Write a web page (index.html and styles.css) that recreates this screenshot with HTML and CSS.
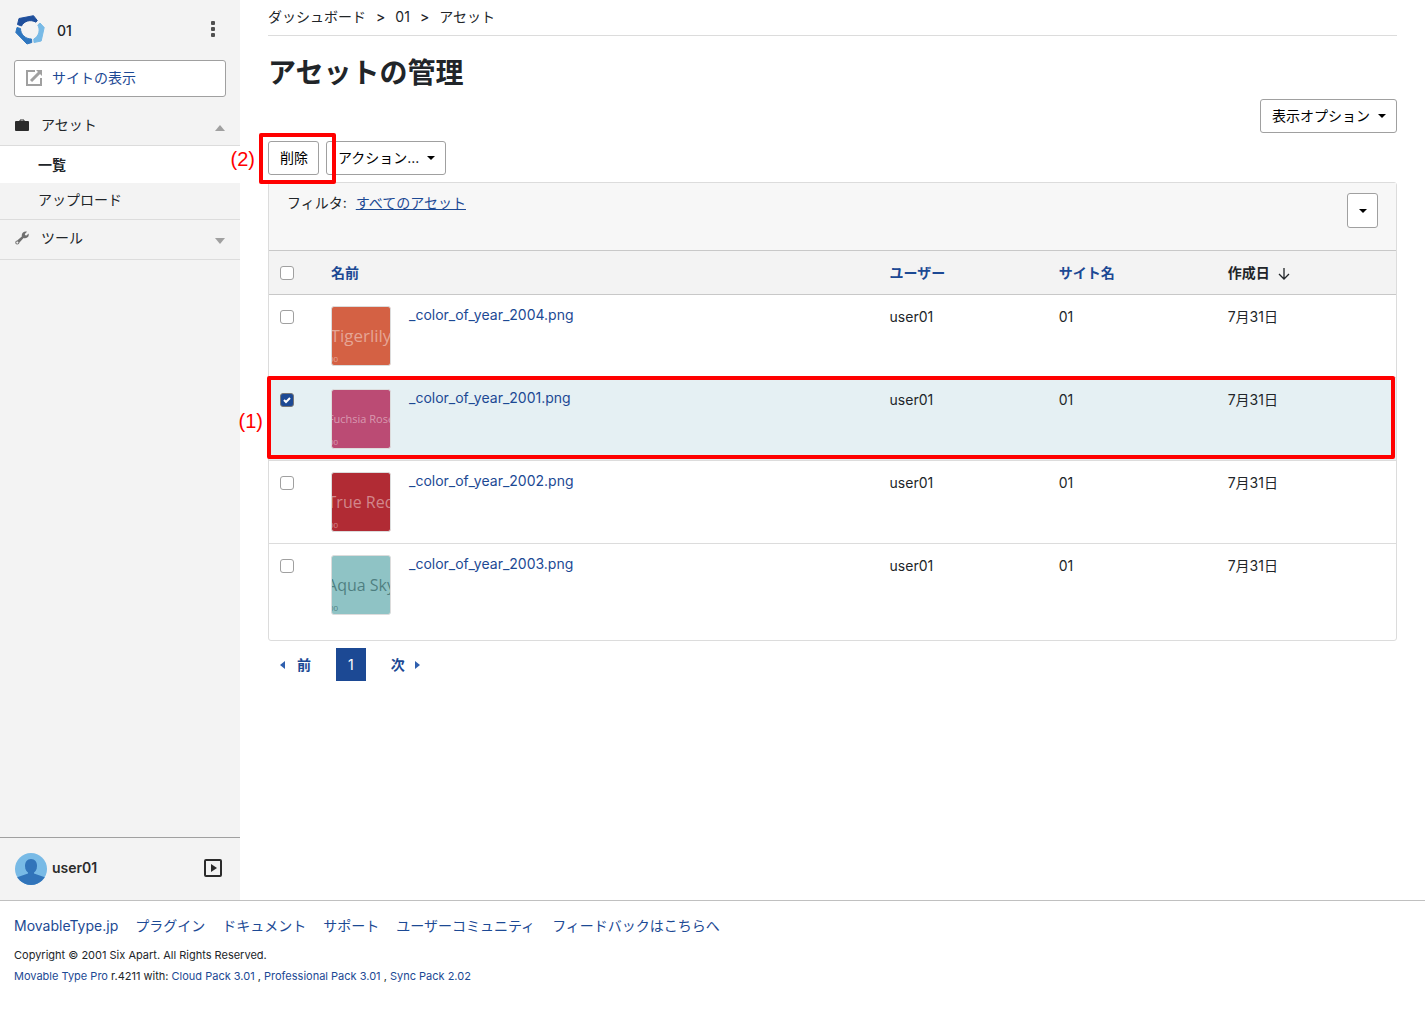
FILE: index.html
```html
<!DOCTYPE html>
<html lang="ja">
<head>
<meta charset="utf-8">
<title>アセットの管理</title>
<link rel="stylesheet" href="styles.css">
</head>
<body>
<div class="layout">
  <aside class="sidebar">
    <div class="site-head">
      <svg class="logo" width="30" height="30" viewBox="0 0 30 30" aria-hidden="true">
        <g stroke-width="1" stroke-linejoin="round">
        <path fill="#1f4f9c" stroke="#1f4f9c" d="M4 3.500L18.500 .7L22.300 5.500L21 7.200C15.500 4 9 6 6.500 11L2.500 9.500Z"/>
        <path fill="#2e76bf" stroke="#2e76bf" d="M2 12.500L5.500 13.500C5.500 19 10 24 16.500 24L16.800 27.500L12 29L.8 17.500Z"/>
        <path fill="#78bae6" stroke="#78bae6" d="M25 8L29.200 12.500L26.200 26L19 27.500L18.800 24C24 21 25.500 15 22.800 10Z"/>
        </g>
      </svg>
      <span class="site-name">01</span>
      <button class="icon-button" type="button" aria-label="メニュー">
        <svg width="4" height="16" viewBox="0 0 4 16"><g fill="#505050"><rect width="4" height="4" rx="1"/><rect y="6" width="4" height="4" rx="1"/><rect y="12" width="4" height="4" rx="1"/></g></svg>
      </button>
    </div>
    <a class="site-view" href="#">
      <svg width="16" height="16" viewBox="0 0 16 16" aria-hidden="true"><path d="M9 1H1V15H15V8" fill="none" stroke="#a0a0a0" stroke-width="2"/><path d="M5 11L14 2" stroke="#a0a0a0" stroke-width="3"/><path d="M10 0H16V6Z" fill="#a0a0a0"/></svg>
      サイトの表示
    </a>
    <nav>
      <a class="menu" href="#">
        <svg width="14" height="14" viewBox="0 0 14 14" aria-hidden="true"><path d="M5 4V2H9V4" fill="none" stroke="#2b2b2b"/><rect y="3" width="14" height="10" rx="1" fill="#2b2b2b"/></svg>
        アセット
        <svg class="menu-arrow" width="10" height="6" viewBox="0 0 10 6" aria-hidden="true"><path d="M0 6L5 0L10 6Z" fill="#a0a0a0"/></svg>
      </a>
      <ul class="submenu">
        <li><a class="current" href="#">一覧</a></li>
        <li><a href="#">アップロード</a></li>
      </ul>
      <a class="menu closed" href="#">
        <svg width="14" height="14" viewBox="0 0 14 14" aria-hidden="true"><path fill="#707070" fill-rule="evenodd" d="M8 1.500C9.200 .4 10.600 .2 12 .7L9.800 2.900L10.200 4.200L11.500 4.500L13.600 2.400C14 4 13.600 5.400 12.500 6.300C11.400 7.200 10 7.500 8.600 7.100L4.500 11.500C4.300 12.700 3.400 13.500 2.200 13.500C1 13.500 .3 12.500 .3 11.500C.3 10.400 1.200 9.500 2.200 9.500L6.800 5.400C6.600 4 7 2.500 8 1.500ZM2.300 10.500A1.100 1.100 0 1 0 2.300 12.700A1.100 1.100 0 1 0 2.300 10.500Z"/></svg>
        ツール
        <svg class="menu-arrow" width="10" height="6" viewBox="0 0 10 6" aria-hidden="true"><path d="M0 0L5 6L10 0Z" fill="#a0a0a0"/></svg>
      </a>
    </nav>
    <div class="user">
      <svg width="32" height="32" viewBox="0 0 32 32" aria-hidden="true"><clipPath id="avatar"><circle cx="16" cy="16" r="16"/></clipPath><g clip-path="url(#avatar)"><rect width="32" height="32" fill="#78bae6"/><path fill="#3174ba" d="M16 6C20 6 22 9 22 13C22 17 20 19 19 19.500V20.500L32 25V32H0V25L13 20.500V19.500C12 19 10 17 10 13C10 9 12 6 16 6Z"/></g></svg>
      <span>user01</span>
      <button class="icon-button" type="button" aria-label="開く">
        <svg width="18" height="18" viewBox="0 0 18 18"><rect x="1" y="1" width="16" height="16" rx="1" fill="none" stroke="#2b2b2b" stroke-width="2"/><path d="M7 5V13L13 9Z" fill="#2b2b2b"/></svg>
      </button>
    </div>
  </aside>

  <main>
    <nav class="breadcrumb"><a href="#">ダッシュボード</a><b>&gt;</b><a href="#">01</a><b>&gt;</b><a href="#">アセット</a></nav>
    <h1>アセットの管理</h1>
    <div class="options"><button class="btn" type="button">表示オプション<i class="caret"></i></button></div>
    <div class="actions">
      <button class="btn" type="button">削除</button>
      <button class="btn" type="button">アクション...<i class="caret"></i></button>
      <div class="mark mark-delete"><span>(2)</span></div>
    </div>
    <div class="panel">
      <div class="filter">
        <p>フィルタ:<a href="#">すべてのアセット</a></p>
        <button class="btn btn-caret" type="button" aria-label="フィルタを選択"><i class="caret"></i></button>
      </div>
      <table>
        <colgroup><col class="col-check"><col><col class="col-user"><col class="col-site"><col class="col-date"></colgroup>
        <thead>
          <tr><th><input type="checkbox" aria-label="すべて選択"></th><th><a href="#">名前</a></th><th><a href="#">ユーザー</a></th><th><a href="#">サイト名</a></th><th>作成日<svg class="sort" width="12" height="12" viewBox="0 0 12 12" aria-hidden="true"><path d="M6 0V11M1 6L6 11L11 6" fill="none" stroke="#212529" stroke-width="1.300"/></svg></th></tr>
        </thead>
        <tbody>
          <tr><td><input type="checkbox" aria-label="_color_of_year_2004.png"></td><td><div class="asset"><div class="thumb tiger"><span>Tigerlily</span><small>00</small></div><a href="#">_color_of_year_2004.png</a></div></td><td>user01</td><td>01</td><td>7月31日</td></tr>
          <tr class="selected"><td><input type="checkbox" checked aria-label="_color_of_year_2001.png"><div class="mark mark-row"><span>(1)</span></div></td><td><div class="asset"><div class="thumb fuchsia"><span>Fuchsia Rose</span><small>00</small></div><a href="#">_color_of_year_2001.png</a></div></td><td>user01</td><td>01</td><td>7月31日</td></tr>
          <tr><td><input type="checkbox" aria-label="_color_of_year_2002.png"></td><td><div class="asset"><div class="thumb red"><span>True Red</span><small>00</small></div><a href="#">_color_of_year_2002.png</a></div></td><td>user01</td><td>01</td><td>7月31日</td></tr>
          <tr><td><input type="checkbox" aria-label="_color_of_year_2003.png"></td><td><div class="asset"><div class="thumb aqua"><span>Aqua Sky</span><small>00</small></div><a href="#">_color_of_year_2003.png</a></div></td><td>user01</td><td>01</td><td>7月31日</td></tr>
        </tbody>
      </table>
    </div>
    <nav class="pager">
      <a href="#"><svg width="5" height="8" viewBox="0 0 5 8" aria-hidden="true"><path d="M5 0V8L0 4Z" fill="#2f5fae"/></svg>前</a>
      <a class="page" href="#">1</a>
      <a href="#">次<svg width="5" height="8" viewBox="0 0 5 8" aria-hidden="true"><path d="M0 0V8L5 4Z" fill="#2f5fae"/></svg></a>
    </nav>
  </main>
</div>
<footer>
  <nav><a href="#">MovableType.jp</a><a href="#">プラグイン</a><a href="#">ドキュメント</a><a href="#">サポート</a><a href="#">ユーザーコミュニティ</a><a href="#">フィードバックはこちらへ</a></nav>
  <p>Copyright © 2001 Six Apart. All Rights Reserved.</p>
  <p><a href="#">Movable Type Pro</a> r.4211 with: <a href="#">Cloud Pack 3.01</a> , <a href="#">Professional Pack 3.01</a> , <a href="#">Sync Pack 2.02</a></p>
</footer>
</body>
</html>
```
FILE: styles.css
```css
* { box-sizing: border-box; }
body {
  margin: 0;
  min-height: 100vh;
  display: flex;
  flex-direction: column;
  background: #fff;
  color: #212529;
  font: 14px/20px Inter, "Noto Sans CJK JP", sans-serif;
}
a { color: #1c4994; text-decoration: none; }
button { font: inherit; cursor: pointer; }
p, ul, h1 { margin: 0; padding: 0; }
.layout { flex: 1; display: flex; }

.sidebar {
  flex: none;
  width: 240px;
  display: flex;
  flex-direction: column;
  background: #f3f3f3;
}
.site-head { display: flex; align-items: center; height: 60px; padding: 0 15px; }
.site-name { margin-left: 12px; padding-top: 2px; font-weight: 500; }
.icon-button { display: flex; margin-left: auto; padding: 0; border: 0; background: none; }
.site-head .icon-button { padding: 0 10px 2px 0; }
.site-view {
  display: flex;
  align-items: center;
  gap: 10px;
  height: 37px;
  margin: 0 14px 8px;
  padding: 0 11px 2px;
  background: #fff;
  border: 1px solid #a0a0a0;
  border-radius: 3px;
}
.menu { display: flex; align-items: center; gap: 12px; height: 40px; padding: 0 15px; color: #212529; }
.menu-arrow { margin: 6px 0 0 auto; }
.menu.closed { padding-bottom: 3px; border-bottom: 1px solid #dcdcdc; }
.submenu { list-style: none; border: solid #dcdcdc; border-width: 1px 0; }
.submenu a { display: block; padding: 7px 38px 9px; color: #212529; }
.submenu .current { padding: 9px 38px 8px; background: #fff; font-weight: 700; }
.user {
  display: flex;
  align-items: center;
  gap: 5px;
  height: 63px;
  margin-top: auto;
  padding: 0 18px 0 15px;
  border-top: 1px solid #a0a0a0;
  color: #2b2b2b;
  font-weight: 600;
}
.user span, .user button { padding-bottom: 2px; }

main { flex: 1; min-width: 0; padding: 0 28px; }
.breadcrumb { display: flex; gap: 10px; padding: 7px 0 8px; border-bottom: 1px solid #dcdcdc; }
.breadcrumb a { color: #212529; }
.breadcrumb b { font-weight: 500; }
h1 { padding-top: 19px; font-size: 28px; line-height: 36px; font-weight: 700; }
.options { display: flex; justify-content: flex-end; padding: 8px 0; }
.btn {
  display: flex;
  align-items: center;
  height: 34px;
  padding: 0 10px 0 11px;
  background: #fff;
  color: #000;
  border: 1px solid #a0a0a0;
  border-radius: 3px;
}
.caret { margin-left: 8px; border: 4px solid transparent; border-top-color: #000; border-bottom: 0; }
.actions { position: relative; display: flex; gap: 7px; padding-bottom: 7px; }
.mark { position: absolute; border: 4px solid #f00; border-radius: 2px; pointer-events: none; }
.mark span { position: absolute; color: #f00; font: 20px/24px "Liberation Sans", sans-serif; }
.mark-delete { left: -9px; top: -8px; width: 77px; height: 51px; }
.mark-delete span { right: 100%; top: 10px; margin-right: 8px; }
.mark-row { left: -2px; right: 1px; top: -2px; height: 83px; }
.mark-row span { right: 100%; top: 29px; margin-right: 8px; }

.panel { padding-bottom: 13px; border: 1px solid #dcdcdc; border-radius: 3px; }
.filter { display: flex; justify-content: space-between; height: 67px; padding: 10px 18px; background: #f7f7f7; }
.filter a { margin-left: 9px; text-decoration: underline; }
.btn-caret { height: 35px; }
.btn-caret .caret { margin: 0; }
table { width: 100%; table-layout: fixed; border-collapse: separate; border-spacing: 0; }
.col-check { width: 50px; }
.col-user, .col-site { width: 15%; }
.col-date { width: 16%; }
th { height: 45px; padding: 0 12px; background: #f3f3f3; border: solid #c8c8c8; border-width: 1px 0; text-align: left; font-weight: 700; }
th:first-child, td:first-child { padding-left: 11px; }
td { height: 83px; padding: 11px 12px; border-bottom: 1px solid #dcdcdc; vertical-align: top; }
tr:last-child td { border-bottom: 0; }
.selected { position: relative; }
.selected td { background: #e5f0f3; }
.sort { margin-left: 8px; vertical-align: -2px; }
input {
  appearance: none;
  display: block;
  width: 14px;
  height: 14px;
  margin: 0;
  background: #fff;
  border: 1px solid #a0a0a0;
  border-radius: 3px;
}
td input { margin-top: 4px; }
input:checked {
  border-color: #777;
  background: #1c4994 url("data:image/svg+xml,%3Csvg xmlns='http://www.w3.org/2000/svg' viewBox='0 0 12 12'%3E%3Cpath d='M3 6L5 8L9 4' fill='none' stroke='white' stroke-width='2'/%3E%3C/svg%3E");
}
.asset { display: flex; gap: 18px; }
.asset a { margin-top: -1px; }
.thumb {
  position: relative;
  flex: none;
  display: flex;
  align-items: center;
  justify-content: center;
  width: 60px;
  height: 60px;
  overflow: hidden;
  border: 1px solid #dcdcdc;
  border-radius: 3px;
  white-space: nowrap;
  color: #ffffff70;
  font: 17px/24px "Open Sans", sans-serif;
}
.thumb small { position: absolute; left: -3px; bottom: 1px; font-size: 8px; line-height: 10px; }
.tiger { background: #d46144; }
.fuchsia { background: #bb4b74; font-size: 11px; }
.red { background: #b12b34; font-size: 16px; }
.aqua { background: #8fc3c5; color: #315f61b0; font-size: 16px; }
td:nth-child(n+3) { padding-top: 12px; }

.pager { display: flex; align-items: center; gap: 25px; padding: 7px 12px; font-weight: 700; }
.pager a { display: flex; align-items: center; gap: 12px; }
.pager a:last-child { gap: 10px; }
.pager .page { padding: 7px 12px 6px; background: #1c4994; color: #fff; font-weight: 400; }

footer { padding: 15px 14px 30px; border-top: 1px solid #c0c0c0; }
footer nav { display: flex; flex-wrap: wrap; gap: 17px; margin-bottom: 9px; }
footer p { font-size: 11px; line-height: 21px; }
```
